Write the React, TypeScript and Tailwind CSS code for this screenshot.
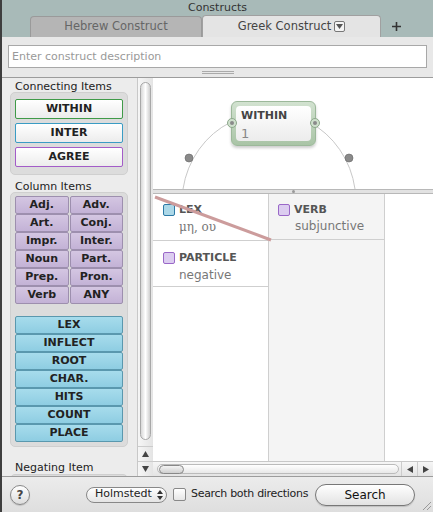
import React from "react";

const connecting = [
  { label: "WITHIN", border: "border-[#3f9a48]" },
  { label: "INTER", border: "border-[#3a9cc4]" },
  { label: "AGREE", border: "border-[#a35cc8]" },
];

const columnItems = [
  ["Adj.", "Adv."],
  ["Art.", "Conj."],
  ["Impr.", "Inter."],
  ["Noun", "Part."],
  ["Prep.", "Pron."],
  ["Verb", "ANY"],
];

const fieldItems = ["LEX", "INFLECT", "ROOT", "CHAR.", "HITS", "COUNT", "PLACE"];

const Check = ({ tone }: { tone: "blue" | "purple" }) => (
  <span
    className={`inline-block w-[12px] h-[12px] rounded-[2px] border ${
      tone === "blue" ? "bg-[#acd8e8] border-[#2d7aa6]" : "bg-[#dccdf0] border-[#9a68c8]"
    }`}
  />
);

const App = () => {
  return (
    <div className="w-[433px] h-[512px] overflow-hidden flex flex-col border-l-2 border-[#3e3e3e] bg-[#e8e8e8] font-['DejaVu_Sans',sans-serif] text-[#222]">
      {/* Title + tabs */}
      <div className="bg-[#a8bab8] h-[37px] flex flex-col shrink-0">
        <div className="h-[15px] text-[11px] leading-[15px] text-center text-[#333]">Constructs</div>
        <div className="flex items-end h-[22px] pl-[28px]">
          <div className="w-[172px] h-[21px] rounded-t-[4px] bg-[#b5b5b5] border border-b-0 border-[#9a9a9a] text-[11.5px] text-[#666] flex items-center justify-center">
            Hebrew Construct
          </div>
          <div className="w-[179px] h-[22px] rounded-t-[4px] bg-[#e4e4e4] border border-b-0 border-[#a0a0a0] text-[11.5px] text-[#444] flex items-center justify-center gap-[3px]">
            Greek Construct
            <span className="w-[11px] h-[11px] rounded-[2px] border border-[#777] bg-[#f4f4f4] flex items-center justify-center">
              <svg width="7" height="5" viewBox="0 0 7 5">
                <path d="M0 0 L7 0 L3.5 5 Z" fill="#555" />
              </svg>
            </span>
          </div>
          <div className="w-[30px] h-[22px] flex items-center justify-center">
            <svg width="9" height="9" viewBox="0 0 9 9">
              <path d="M4.5 0 V9 M0 4.5 H9" stroke="#333" strokeWidth="1.6" />
            </svg>
          </div>
        </div>
      </div>

      {/* description */}
      <div className="h-[40px] shrink-0 bg-[#e8e8e8] px-[6px] pt-[8px] flex flex-col">
        <div className="h-[23px] bg-white border border-[#a8a8a8] text-[11px] text-[#999] leading-[21px] px-[3px]">
          Enter construct description
        </div>
        <div className="mt-[3px] self-center w-[32px] h-[3px] border-y border-[#aaa]" />
      </div>

      {/* main */}
      <div className="flex-1 flex border-t border-[#9c9c9c] min-h-0">
        {/* left panel */}
        <div className="w-[135px] bg-[#ececec] pl-[8px] shrink-0 overflow-hidden">
          <div className="text-[11px] pl-[5px] h-[14px] pt-[4px] leading-[10px] text-[#222] whitespace-nowrap">Connecting Items</div>
          <div className="w-[118px] rounded-[5px] bg-[#dcdcdc] border border-[#cfcfcf] px-[4px] pt-[6px] pb-[7px] flex flex-col gap-[4px]">
            {connecting.map((c) => (
              <div
                key={c.label}
                className={`h-[20px] rounded-[2px] border ${c.border} bg-gradient-to-b from-white to-[#ececec] text-[11px] font-bold flex items-center justify-center`}
              >
                {c.label}
              </div>
            ))}
          </div>

          <div className="text-[11px] pl-[5px] mt-[3px] h-[14px] pt-[3px] leading-[11px] whitespace-nowrap">Column Items</div>
          <div className="w-[118px] h-[255px] rounded-[5px] bg-[#dcdcdc] border border-[#cfcfcf] px-[4px] pt-[3px]">
            <div className="grid grid-cols-2 gap-x-[1px]">
              {columnItems.flat().map((t) => (
                <div
                  key={t}
                  className="h-[18px] rounded-[2px] border border-[#9d8fae] bg-gradient-to-b from-[#d4c6e2] to-[#c3b2d6] text-[11px] font-bold flex items-center justify-center"
                >
                  {t}
                </div>
              ))}
            </div>
            <div className="mt-[12px] flex flex-col">
              {fieldItems.map((t) => (
                <div
                  key={t}
                  className="h-[18px] rounded-[2px] border border-[#5a98ae] bg-gradient-to-b from-[#a7dcec] to-[#8ecde2] text-[11px] font-bold flex items-center justify-center"
                >
                  {t}
                </div>
              ))}
            </div>
          </div>

          <div className="text-[11px] pl-[5px] mt-[13px] h-[14px] pt-[2px] leading-[12px] whitespace-nowrap">Negating Item</div>
          <div className="w-[118px] h-[20px] rounded-[5px] bg-[#dcdcdc] border border-[#cfcfcf]" />
        </div>

        {/* vertical scrollbar */}
        <div className="w-[16px] shrink-0 bg-gradient-to-r from-[#f6f6f6] to-[#e4e4e4] border-l border-[#c8c8c8] flex flex-col">
          <div className="flex-1 px-[2px] pt-[4px] pb-[6px]">
            <div className="h-full rounded-full border border-[#a8a8a8] bg-gradient-to-r from-[#d8d8d8] via-white to-[#cfcfcf]" />
          </div>
          <div className="h-[15px] flex items-center justify-center border-t border-[#ccc]">
            <svg width="7" height="6" viewBox="0 0 7 6"><path d="M3.5 0 L7 6 L0 6 Z" fill="#444" /></svg>
          </div>
          <div className="h-[15px] flex items-center justify-center border-t border-[#ccc]">
            <svg width="7" height="6" viewBox="0 0 7 6"><path d="M0 0 L7 0 L3.5 6 Z" fill="#444" /></svg>
          </div>
        </div>

        {/* right area */}
        <div className="flex-1 flex flex-col bg-white min-w-0">
          {/* canvas */}
          <div className="relative h-[111px] shrink-0 bg-white overflow-hidden">
            <svg className="absolute left-0 top-0" width="280" height="111" viewBox="0 0 280 111">
              <path d="M30 111 A 86 90 0 0 1 78 44" fill="none" stroke="#c8c8c8" strokeWidth="1" />
              <path d="M202 111 A 86 90 0 0 0 156 44" fill="none" stroke="#c8c8c8" strokeWidth="1" />
              <circle cx="36" cy="80" r="4" fill="#8a8a8a" stroke="#666" strokeWidth="0.6" />
              <circle cx="196" cy="80" r="4" fill="#8a8a8a" stroke="#666" strokeWidth="0.6" />
            </svg>
            <div className="absolute left-[78px] top-[23px] w-[85px] h-[45px] rounded-[6px] bg-gradient-to-b from-[#d2e2d0] to-[#a9c4a6] border border-[#9cb89a] shadow-[0_2px_3px_rgba(0,0,0,0.2)] p-[4px]">
              <div className="h-full rounded-[4px] bg-gradient-to-b from-white to-[#ececec] px-[5px] pt-[3px]">
                <div className="text-[11px] font-bold text-[#444] leading-[13px]">WITHIN</div>
                <div className="text-[13px] text-[#888] leading-[18px] mt-[3px]">1</div>
              </div>
              <span className="absolute left-[-5px] top-[16px] w-[10px] h-[10px] rounded-full bg-[#cfe0cd] border border-[#8da88b] flex items-center justify-center">
                <span className="w-[4px] h-[4px] rounded-full bg-[#8a8a8a]" />
              </span>
              <span className="absolute right-[-5px] top-[16px] w-[10px] h-[10px] rounded-full bg-[#cfe0cd] border border-[#8da88b] flex items-center justify-center">
                <span className="w-[4px] h-[4px] rounded-full bg-[#8a8a8a]" />
              </span>
            </div>
          </div>

          {/* splitter */}
          <div className="h-[5px] shrink-0 bg-[#e2e2e2] border-y border-[#b8b8b8] flex items-center justify-center">
            <span className="w-[3px] h-[3px] rounded-full bg-[#999]" />
          </div>

          {/* table */}
          <div className="flex-1 relative flex min-h-0">
            <div className="w-[116px] border-r border-[#cfcfcf] bg-white flex flex-col shrink-0">
              <div className="h-[47px] border-b border-[#cfcfcf] pl-[10px] pt-[8px]">
                <div className="flex items-center gap-[4px] text-[11px] font-bold text-[#555]">
                  <Check tone="blue" />
                  LEX
                </div>
                <div className="pl-[16px] text-[12px] leading-[14px] mt-[1px] text-[#777] font-['DejaVu_Serif',serif]">μη, ου</div>
              </div>
              <div className="h-[46px] border-b border-[#cfcfcf] pl-[10px] pt-[9px]">
                <div className="flex items-center gap-[4px] text-[11px] font-bold text-[#555]">
                  <Check tone="purple" />
                  PARTICLE
                </div>
                <div className="pl-[16px] text-[12px] leading-[14px] mt-[1px] text-[#777]">negative</div>
              </div>
            </div>
            <div className="w-[116px] border-r border-[#cfcfcf] bg-[#f4f4f4] flex flex-col shrink-0">
              <div className="h-[46px] border-b border-[#cfcfcf] pl-[9px] pt-[8px]">
                <div className="flex items-center gap-[4px] text-[11px] font-bold text-[#555]">
                  <Check tone="purple" />
                  VERB
                </div>
                <div className="pl-[17px] text-[12px] leading-[14px] mt-[0px] text-[#777]">subjunctive</div>
              </div>
            </div>
            <div className="flex-1 bg-white" />
            <svg className="absolute left-0 top-0 pointer-events-none" width="120" height="50" viewBox="0 0 120 50">
              <line x1="2" y1="3" x2="118" y2="46" stroke="#cc9c9c" strokeWidth="3" />
            </svg>
          </div>

          {/* horizontal scrollbar */}
          <div className="h-[15px] shrink-0 bg-gradient-to-b from-[#f6f6f6] to-[#e4e4e4] border-t border-[#c8c8c8] flex items-center">
            <div className="flex-1 h-full py-[2px] pl-[4px] pr-[2px]">
              <div className="h-full rounded-full border border-[#bbb] bg-gradient-to-b from-white to-[#e8e8e8] relative">
                <div className="absolute left-[1px] top-[0px] w-[25px] h-[9px] rounded-full border border-[#888] bg-gradient-to-b from-[#f4f4f4] to-[#cfcfcf]" />
              </div>
            </div>
            <div className="w-[16px] h-full flex items-center justify-center border-l border-[#ccc]">
              <svg width="6" height="7" viewBox="0 0 6 7"><path d="M6 0 L6 7 L0 3.5 Z" fill="#444" /></svg>
            </div>
            <div className="w-[16px] h-full flex items-center justify-center border-l border-[#ccc]">
              <svg width="6" height="7" viewBox="0 0 6 7"><path d="M0 0 L6 3.5 L0 7 Z" fill="#444" /></svg>
            </div>
          </div>
        </div>
      </div>

      {/* bottom bar */}
      <div className="h-[36px] shrink-0 border-t border-[#9c9c9c] bg-gradient-to-b from-[#ececec] to-[#dedede] flex items-center pl-[8px] relative">
        <div className="w-[20px] h-[20px] rounded-full border border-[#888] bg-gradient-to-b from-white to-[#dcdcdc] text-[12px] font-bold text-[#444] flex items-center justify-center shadow-[0_1px_1px_rgba(0,0,0,0.15)]">
          ?
        </div>
        <div className="ml-[56px] w-[81px] h-[16px] rounded-full border border-[#888] bg-gradient-to-b from-white to-[#e4e4e4] text-[11px] text-[#222] flex items-center pl-[8px] gap-[5px]">
          Holmstedt
          <svg width="6" height="10" viewBox="0 0 6 10">
            <path d="M0 4 L3 0 L6 4 Z M0 6 L6 6 L3 10 Z" fill="#333" />
          </svg>
        </div>
        <div className="ml-[6px] w-[13px] h-[13px] rounded-[2px] border border-[#888] bg-gradient-to-b from-white to-[#e6e6e6]" />
        <div className="ml-[5px] text-[11px] tracking-[-0.3px] text-[#222] whitespace-nowrap">Search both directions</div>
        <div className="ml-[7px] w-[100px] h-[22px] rounded-full border border-[#777] bg-gradient-to-b from-white to-[#e2e2e2] text-[12px] text-[#111] flex items-center justify-center shadow-[0_1px_1px_rgba(0,0,0,0.15)]">
          Search
        </div>
        <svg className="absolute right-[1px] bottom-[1px]" width="12" height="12" viewBox="0 0 12 12">
          <path d="M11 3 L3 11 M11 7 L7 11" stroke="#999" strokeWidth="1" />
        </svg>
      </div>
    </div>
  );
};

export default App;
